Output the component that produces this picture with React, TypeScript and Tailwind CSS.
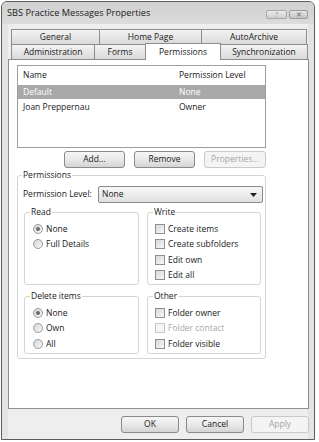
import React from "react";

const font = "font-['Open_Sans','Noto_Sans',sans-serif]";

function Btn({ children, w, disabled }: { children: React.ReactNode; w: string; disabled?: boolean }) {
  return (
    <div
      className={`${w} h-[17px] flex items-center justify-center rounded-[3px] border text-[8.5px] leading-none ${
        disabled
          ? "border-[#c9c9c9] bg-[#f4f4f4] text-[#a6a6a6]"
          : "border-[#8a8a8a] bg-gradient-to-b from-[#f6f6f6] via-[#e9e9e9] to-[#d4d4d4] text-[#1a1a1a]"
      }`}
    >
      {children}
    </div>
  );
}

function Radio({ label, checked }: { label: string; checked?: boolean }) {
  return (
    <div className="h-[15.5px] flex items-center pl-[8px] gap-[3px]">
      <div className="w-[10px] h-[10px] rounded-full border border-[#9a9a9a] bg-gradient-to-br from-[#d6d6d6] to-[#f8f8f8] flex items-center justify-center">
        {checked && <div className="w-[4px] h-[4px] rounded-full bg-[#6a6a6a]" />}
      </div>
      <span className="text-[8.5px] text-[#1a1a1a] leading-none">{label}</span>
    </div>
  );
}

function Check({ label, disabled }: { label: string; disabled?: boolean }) {
  return (
    <div className="h-[15.5px] flex items-center pl-[7px] gap-[3px]">
      <div
        className={`w-[10px] h-[10px] border ${
          disabled ? "border-[#c8c8c8] bg-[#f4f4f4]" : "border-[#8f8f8f] bg-gradient-to-br from-[#d8d8d8] to-[#f8f8f8]"
        }`}
      />
      <span className={`text-[8.5px] leading-none ${disabled ? "text-[#a8a8a8]" : "text-[#1a1a1a]"}`}>{label}</span>
    </div>
  );
}

function Group({
  title,
  w,
  h,
  children,
  legendPad = "ml-[5px]",
}: {
  title: string;
  w: string;
  h: string;
  children: React.ReactNode;
  legendPad?: string;
}) {
  return (
    <fieldset className={`${w} ${h} border border-[#d5d5d5] rounded-[3px] bg-white`}>
      <legend className={`${legendPad} px-[1px] text-[8.5px] leading-[12px] text-[#1a1a1a]`}>{title}</legend>
      {children}
    </fieldset>
  );
}

function Tab({ label, w, selected }: { label: string; w: string; selected?: boolean }) {
  return (
    <div
      className={`${w} flex items-center justify-center text-[8.5px] leading-none text-[#1a1a1a] border border-[#8e8e8e] -ml-[1px] first:ml-0 ${
        selected
          ? "h-[17px] bg-white border-b-0 z-10 relative -mb-[1px]"
          : "h-[15px] bg-gradient-to-b from-[#f3f3f3] to-[#dadada] border-b-0"
      }`}
    >
      {label}
    </div>
  );
}

export default function App() {
  return (
    <div className={`w-[319px] h-[442px] bg-white pl-[1px] pt-[1px] ${font}`}>
      <div className="w-[314px] h-[439px] border border-[#5c5c5c] rounded-t-[6px] bg-[#e4e4e4] flex flex-col">
        {/* Title bar */}
        <div className="h-[22px] flex items-start pl-[5px] pr-[6px] bg-gradient-to-b from-[#d0d0d0] to-[#dcdcdc] rounded-t-[5px]">
          <span className="mt-[5px] text-[9.2px] leading-[12px] text-[#222]">SBS Practice Messages Properties</span>
          <div className="ml-auto mt-[8px] flex gap-[2px]">
            <div className="w-[21px] h-[9px] rounded-[2px] border border-[#a8a8a8] bg-gradient-to-b from-[#ececec] to-[#cfcfcf] flex items-center justify-center text-[7px] leading-none text-[#9a9a9a]">
              ?
            </div>
            <div className="w-[19px] h-[9px] rounded-[2px] border border-[#9a9a9a] bg-gradient-to-b from-[#e6e6e6] to-[#c4c4c4] flex items-center justify-center text-[7px] font-bold leading-none text-[#8a8a8a]">
              ✕
            </div>
          </div>
        </div>
        {/* Client */}
        <div className="flex-1 bg-[#eeeeee] mx-[6px] flex flex-col">
          {/* Tabs */}
          <div className="pt-[5px] pl-[3px] flex flex-col">
            <div className="flex">
              <Tab label="General" w="w-[89px]" />
              <Tab label="Home Page" w="w-[103px]" />
              <Tab label="AutoArchive" w="w-[106px]" />
            </div>
            <div className="flex items-end -mt-[1px]">
              <Tab label="Administration" w="w-[84px]" />
              <Tab label="Forms" w="w-[52px]" />
              <Tab label="Permissions" w="w-[76px]" selected />
              <Tab label="Synchronization" w="w-[88px]" />
            </div>
          </div>
          {/* Panel */}
          <div className="w-[301px] h-[350px] border border-[#8e8e8e] bg-white flex flex-col pl-[8px]">
            {/* List */}
            <div className="mt-[5px] w-[249px] h-[83px] border border-[#9e9e9e] bg-white flex flex-col text-[8.5px] text-[#1a1a1a] leading-none">
              <div className="h-[19px] flex items-center">
                <span className="w-[161px] pl-[5px]">Name</span>
                <span>Permission Level</span>
              </div>
              <div className="h-[14px] flex items-center bg-[#a9a9a9] text-white">
                <span className="w-[161px] pl-[5px]">Default</span>
                <span>None</span>
              </div>
              <div className="h-[16px] flex items-center">
                <span className="w-[161px] pl-[5px]">Joan Preppernau</span>
                <span>Owner</span>
              </div>
            </div>
            {/* Buttons */}
            <div className="mt-[3px] w-[249px] flex justify-end gap-[9px]">
              <Btn w="w-[61px]">Add...</Btn>
              <Btn w="w-[61px]">Remove</Btn>
              <Btn w="w-[62px]" disabled>
                Properties...
              </Btn>
            </div>
            {/* Permissions group */}
            <div className="mt-[1px]">
              <Group title="Permissions" w="w-[249px]" h="h-[190px]" legendPad="ml-[4px]">
                <div className="mt-[5px] flex items-center pl-[5px]">
                  <span className="w-[75px] text-[8.5px] leading-none text-[#1a1a1a]">Permission Level:</span>
                  <div className="w-[165px] h-[17px] border border-[#8a8a8a] rounded-[2px] bg-gradient-to-b from-[#f8f8f8] to-[#e0e0e0] flex items-center pl-[3px] pr-[5px]">
                    <span className="text-[8.5px] leading-none text-[#1a1a1a]">None</span>
                    <svg className="ml-auto" width="7" height="4" viewBox="0 0 7 4">
                      <path d="M0 0 H7 L3.5 4 Z" fill="#222" />
                    </svg>
                  </div>
                </div>
                <div className="mt-[3px] pl-[6px] flex gap-[8px]">
                  <Group title="Read" w="w-[115px]" h="h-[79px]">
                    <div className="mt-[3px]">
                      <Radio label="None" checked />
                      <Radio label="Full Details" />
                    </div>
                  </Group>
                  <Group title="Write" w="w-[114px]" h="h-[79px]">
                    <div className="mt-[3px]">
                      <Check label="Create items" />
                      <Check label="Create subfolders" />
                      <Check label="Edit own" />
                      <Check label="Edit all" />
                    </div>
                  </Group>
                </div>
                <div className="mt-[5px] pl-[6px] flex gap-[8px]">
                  <Group title="Delete items" w="w-[115px]" h="h-[64px]">
                    <div className="mt-[3px]">
                      <Radio label="None" checked />
                      <Radio label="Own" />
                      <Radio label="All" />
                    </div>
                  </Group>
                  <Group title="Other" w="w-[114px]" h="h-[64px]">
                    <div className="mt-[3px]">
                      <Check label="Folder owner" />
                      <Check label="Folder contact" disabled />
                      <Check label="Folder visible" />
                    </div>
                  </Group>
                </div>
              </Group>
            </div>
          </div>
          {/* Bottom buttons */}
          <div className="mt-[7px] w-[301px] flex justify-end gap-[7px]">
            <Btn w="w-[58px]">OK</Btn>
            <Btn w="w-[58px]">Cancel</Btn>
            <Btn w="w-[58px]" disabled>
              Apply
            </Btn>
          </div>
        </div>
      </div>
    </div>
  );
}
